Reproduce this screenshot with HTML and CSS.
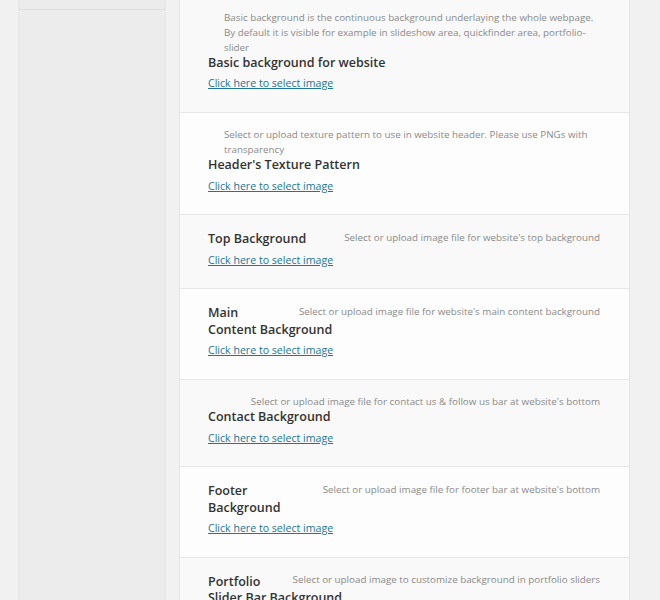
FILE: index.html
```html
<!DOCTYPE html>
<html lang="en">
<head>
    <meta charset="UTF-8">
    <title>Theme Options - Backgrounds</title>
    <link rel="stylesheet" href="styles.css">
</head>
<body>
    <div class="wrap">
        <!-- left menu column -->
        <div class="sidebar">
            <div class="menu-item"></div>
        </div>

        <!-- option rows -->
        <div class="options">
            <div class="option">
                <div class="desc">Basic background is the continuous background underlaying the whole webpage. By default it is visible for example in slideshow area, quickfinder area, portfolio-slider</div>
                <h4 class="title">Basic background for website</h4>
                <a href="#" class="select">Click here to select image</a>
            </div>
            <div class="option">
                <div class="desc">Select or upload texture pattern to use in website header. Please use PNGs with transparency</div>
                <h4 class="title">Header's Texture Pattern</h4>
                <a href="#" class="select">Click here to select image</a>
            </div>
            <div class="option">
                <div class="desc">Select or upload image file for website's top background</div>
                <h4 class="title">Top Background</h4>
                <a href="#" class="select">Click here to select image</a>
            </div>
            <div class="option">
                <div class="desc">Select or upload image file for website's main content background</div>
                <h4 class="title">Main Content Background</h4>
                <a href="#" class="select">Click here to select image</a>
            </div>
            <div class="option">
                <div class="desc">Select or upload image file for contact us &amp; follow us bar at website's bottom</div>
                <h4 class="title">Contact Background</h4>
                <a href="#" class="select">Click here to select image</a>
            </div>
            <div class="option">
                <div class="desc">Select or upload image file for footer bar at website's bottom</div>
                <h4 class="title">Footer Background</h4>
                <a href="#" class="select">Click here to select image</a>
            </div>
            <div class="option">
                <div class="desc">Select or upload image to customize background in portfolio sliders</div>
                <h4 class="title">Portfolio Slider Bar Background</h4>
                <a href="#" class="select">Click here to select image</a>
            </div>
        </div>
    </div>
</body>
</html>
```

FILE: styles.css
```css
body {
    margin: 0;
    padding: 0;
    background-color: #f1f1f1;
    font-family: 'Open Sans', 'Liberation Sans', sans-serif;
    color: #333;
    overflow: hidden;
}
.wrap {
    display: flex;
    align-items: flex-start;
    gap: 13px;
    padding-left: 18px;
}
.sidebar {
    width: 148px;
    min-height: 640px;
    background-color: #ececec;
    border-left: 1px solid #e6e6e6;
    border-right: 1px solid #e6e6e6;
    box-sizing: border-box;
}
.menu-item {
    height: 9px;
    border-bottom: 1px solid #dedede;
}
.options {
    width: 451px;
    margin-top: -6px;
    border-left: 1px solid #e5e5e5;
    border-right: 1px solid #e5e5e5;
    box-sizing: border-box;
}
.option {
    padding: 14.5px 29px 20.5px 28px;
    background-color: #f9f9f9;
    border-top: 1px solid #e7e7e7;
}
.option:nth-child(even) {
    background-color: #fdfdfd;
}
.option::after {
    content: "";
    display: block;
    clear: both;
}
/* help text floats right, titles wrap around it */
.desc {
    float: right;
    max-width: 376px;
    margin-left: 15px;
    font-size: 9.8px;
    line-height: 15px;
    color: #8a8a8a;
}
.title {
    margin: 1.5px 0 0;
    font-size: 12.5px;
    line-height: 16.5px;
    font-weight: 600;
    color: #333;
}
.select {
    display: block;
    width: fit-content;
    margin-top: 5px;
    font-size: 10.6px;
    line-height: 15px;
    color: #21759b;
    text-decoration: underline;
}
```
